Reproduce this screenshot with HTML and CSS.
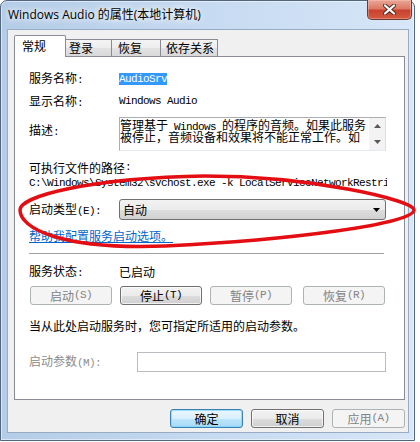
FILE: index.html
```html
<!DOCTYPE html>
<html lang="zh-CN">
<head>
<meta charset="utf-8">
<title>Windows Audio 的属性(本地计算机)</title>
<link rel="stylesheet" href="styles.css">
</head>
<body>
<div class="window">
  <div class="titlebar">
    <span class="title">Windows Audio 的属性(本地计算机)</span>
    <div class="close">
      <svg width="13" height="11" viewBox="0 0 13 11"><path d="M2 1.5L11 9.5M11 1.5L2 9.5" stroke="#5a2820" stroke-width="4.2" stroke-linecap="round"/><path d="M2 1.5L11 9.5M11 1.5L2 9.5" stroke="#fff" stroke-width="2.3" stroke-linecap="round"/></svg>
    </div>
  </div>
  <div class="client">
    <div class="tabs">
      <div class="tab active">常规</div>
      <div class="tab t2">登录</div>
      <div class="tab t3">恢复</div>
      <div class="tab t4">依存关系</div>
    </div>
    <div class="panel">
      <div class="row r-name"><span class="lbl">服务名称<span class="m">:</span></span><span class="sel m">AudioSrv</span></div>
      <div class="row r-disp"><span class="lbl">显示名称<span class="m">:</span></span><span class="m">Windows Audio</span></div>
      <div class="row r-desc">
        <span class="lbl">描述<span class="m">:</span></span>
        <div class="ta">
          <div class="ta-text">
            <div class="ta-line">管理基于<span class="m"> Windows </span>的程序的音频。如果此服务</div>
            <div class="ta-line">被停止，音频设备和效果将不能正常工作。如</div>
          </div>
          <div class="sb">
            <svg width="7" height="4" viewBox="0 0 7 4"><path d="M3.5 0L7 4H0Z" fill="#5a5a5a"/></svg>
            <svg width="7" height="4" viewBox="0 0 7 4"><path d="M0 0H7L3.5 4Z" fill="#5a5a5a"/></svg>
          </div>
        </div>
      </div>
      <div class="row r-exe">可执行文件的路径<span class="m">:</span></div>
      <div class="row r-path m">C:\Windows\System32\svchost.exe -k LocalServiceNetworkRestricted</div>
      <div class="row r-type">
        <span class="lbl">启动类型<span class="m">(E):</span></span>
        <div class="combo"><span>自动</span><svg width="7" height="4" viewBox="0 0 7 4"><path d="M0 0H7L3.5 4Z" fill="#000"/></svg></div>
      </div>
      <div class="row r-link"><span class="link">帮助我配置服务启动选项。</span></div>
      <div class="sep"></div>
      <div class="row r-status"><span class="lbl">服务状态<span class="m">:</span></span><span>已启动</span></div>
      <div class="btnrow">
        <div class="btn disabled">启动<span class="m">(S)</span></div>
        <div class="btn">停止<span class="m">(T)</span></div>
        <div class="btn disabled">暂停<span class="m">(P)</span></div>
        <div class="btn disabled last">恢复<span class="m">(R)</span></div>
      </div>
      <div class="row r-hint">当从此处启动服务时，您可指定所适用的启动参数。</div>
      <div class="row r-param">
        <span class="lbl lbl-wide dim">启动参数<span class="m">(M):</span></span>
        <div class="inp"></div>
      </div>
    </div>
    <div class="footer">
      <div class="btn fbtn default">确定</div>
      <div class="btn fbtn">取消</div>
      <div class="btn fbtn disabled">应用<span class="m">(A)</span></div>
    </div>
  </div>
</div>
<svg class="mark" width="420" height="442" viewBox="0 0 420 442">
  <path d="M20 210C20 196 90 178 205 176C310 176 414 200 414 210C414 224 290 240 165 246C60 250 20 228 20 210Z" fill="none" stroke="#e30d12" stroke-width="3.5"/>
</svg>
</body>
</html>
```
FILE: styles.css
```css
* { box-sizing: border-box; }
html, body { margin: 0; padding: 0; }
body {
  width: 420px;
  height: 442px;
  background: #fff;
  font-family: "Noto Sans CJK SC", "Noto Sans", sans-serif;
  font-size: 12px;
  color: #000;
  position: relative;
  overflow: hidden;
}
.m {
  font-family: "Liberation Mono", "Noto Sans CJK SC", monospace;
  font-size: 11px;
  letter-spacing: -0.6px;
}
.window {
  width: 415px;
  height: 441px;
  border: 1px solid #52667d;
  border-radius: 7px 7px 0 0;
  background: linear-gradient(to right, #b4cce7 0%, #c6daf1 50%, #d7e6f8 100%);
  box-shadow: inset 0 0 0 1px rgba(255, 255, 255, 0.5);
  padding: 0 5px 7px 6px;
  display: flex;
  flex-direction: column;
}
.titlebar {
  height: 28px;
  flex: none;
  margin: 0 -5px 0 -6px;
  padding-left: 7px;
  display: flex;
  align-items: flex-start;
}
.title {
  margin-top: 6px;
  line-height: 16px;
  font-family: "Open Sans", "Noto Sans CJK SC", sans-serif;
  font-size: 12px;
  color: #000;
  text-shadow: 0 0 6px #fff, 0 0 10px #fff;
  white-space: nowrap;
}
.close {
  margin-left: auto;
  margin-right: 2px;
  margin-top: -1px;
  width: 45px;
  height: 20px;
  border: 1px solid #6b3a33;
  border-top: none;
  border-radius: 0 0 5px 5px;
  background: linear-gradient(#e9a797 0%, #dc7a66 45%, #c8432d 55%, #d45a41 100%);
  box-shadow: inset 0 0 0 1px rgba(255, 210, 200, 0.35);
  display: flex;
  align-items: center;
  justify-content: center;
}
.client {
  flex: 1;
  background: #f0f0f0;
  border: 1px solid #97abc2;
  padding: 5px 3px 0 6px;
  display: flex;
  flex-direction: column;
}
.tabs {
  display: flex;
  align-items: flex-end;
  height: 21px;
  flex: none;
}
.tab {
  height: 17px;
  border: 1px solid #898c95;
  border-bottom: none;
  background: linear-gradient(#f4f4f4 0%, #ededed 50%, #e2e2e2 51%, #d9d9d9 100%);
  line-height: 16px;
  white-space: nowrap;
}
.tab.active {
  position: relative;
  z-index: 2;
  height: 22px;
  margin-bottom: -1px;
  width: 52px;
  padding: 2px 0 0 7px;
  background: #fff;
  border-radius: 2px 2px 0 0;
}
.t2 { width: 49px; margin-left: -3px; padding-left: 5px; }
.t3 { width: 50px; margin-left: -1px; padding-left: 6px; }
.t4 { width: 58px; margin-left: -1px; padding-left: 5px; }
.panel {
  height: 344px;
  flex: none;
  background: #fff;
  border: 1px solid #898c95;
  padding: 0 18px 0 14px;
  display: flex;
  flex-direction: column;
}
.row {
  display: flex;
  align-items: center;
  height: 13px;
  line-height: 13px;
  flex: none;
  white-space: nowrap;
}
.lbl { width: 90px; flex: none; }
.lbl-wide { width: 108px; }
.dim { color: #8c8c8c; }
.r-name { margin-top: 15px; }
.sel {
  display: inline-block;
  height: 12px;
  line-height: 12px;
  background: #3399ff;
  color: #fff;
}
.r-disp { margin-top: 10px; }
.r-desc {
  margin-top: 9px;
  height: 34px;
  align-items: flex-start;
}
.r-desc .lbl { margin-top: 6px; }
.ta {
  flex: 1;
  height: 34px;
  border: 1px solid #abadb3;
  border-right-color: #dbdfe6;
  border-bottom-color: #e3e9ef;
  display: flex;
}
.ta-text {
  flex: 1;
  padding-top: 1px;
  overflow: hidden;
}
.ta-line {
  height: 12px;
  line-height: 12px;
  white-space: nowrap;
}
.sb {
  width: 16px;
  flex: none;
  background: #f3f3f3;
  display: flex;
  flex-direction: column;
  justify-content: space-around;
  align-items: center;
}
.sb svg { display: block; }
.r-exe { margin-top: 10px; }
.r-path { margin-top: 3px; overflow: hidden; width: 358px; }
.r-type { margin-top: 9px; height: 21px; }
.combo {
  flex: 1;
  height: 21px;
  border: 1px solid #707070;
  border-radius: 3px;
  background: linear-gradient(#f2f2f2 0%, #ebebeb 50%, #dddddd 51%, #d1d1d1 100%);
  display: flex;
  align-items: center;
  justify-content: space-between;
  padding: 0 5px 0 3px;
  line-height: 15px;
}
.combo svg { display: block; }
.r-link { margin-top: 9px; }
.link { color: #0066cc; text-decoration: underline; }
.sep {
  margin-top: 11px;
  height: 1px;
  flex: none;
  background: #a0a0a0;
  margin-right: 2px;
}
.r-status { margin-top: 11px; }
.btnrow {
  margin-top: 8px;
  height: 19px;
  flex: none;
  display: flex;
  gap: 8px;
  padding: 0 1px;
}
.btn {
  width: 82px;
  height: 19px;
  border: 1px solid #707070;
  border-radius: 3px;
  background: linear-gradient(#f2f2f2 0%, #ebebeb 50%, #dddddd 51%, #cfcfcf 100%);
  box-shadow: inset 0 0 0 1px rgba(255, 255, 255, 0.7);
  display: flex;
  align-items: center;
  justify-content: center;
  line-height: 15px;
  white-space: nowrap;
}
.btn.disabled {
  border-color: #adb2b5;
  background: #f4f4f4;
  box-shadow: none;
  color: #838383;
}
.btn.last { margin-left: auto; }
.r-hint { margin-top: 14px; }
.r-param { margin-top: 20px; height: 20px; }
.inp {
  flex: 1;
  height: 20px;
  border: 1px solid #b8bcc0;
  background: #fff;
}
.footer {
  display: flex;
  justify-content: flex-end;
  gap: 8px;
  margin-top: 9px;
}
.fbtn { width: 73px; }
.btn.default {
  border-color: #3c7fb1;
  background: linear-gradient(#eaf6fd 0%, #d9f0fc 50%, #bee6fd 51%, #a7d9f5 100%);
  box-shadow: inset 0 0 0 1px rgba(120, 215, 250, 0.7);
}
.mark {
  position: absolute;
  left: 0;
  top: 0;
  pointer-events: none;
}
```
